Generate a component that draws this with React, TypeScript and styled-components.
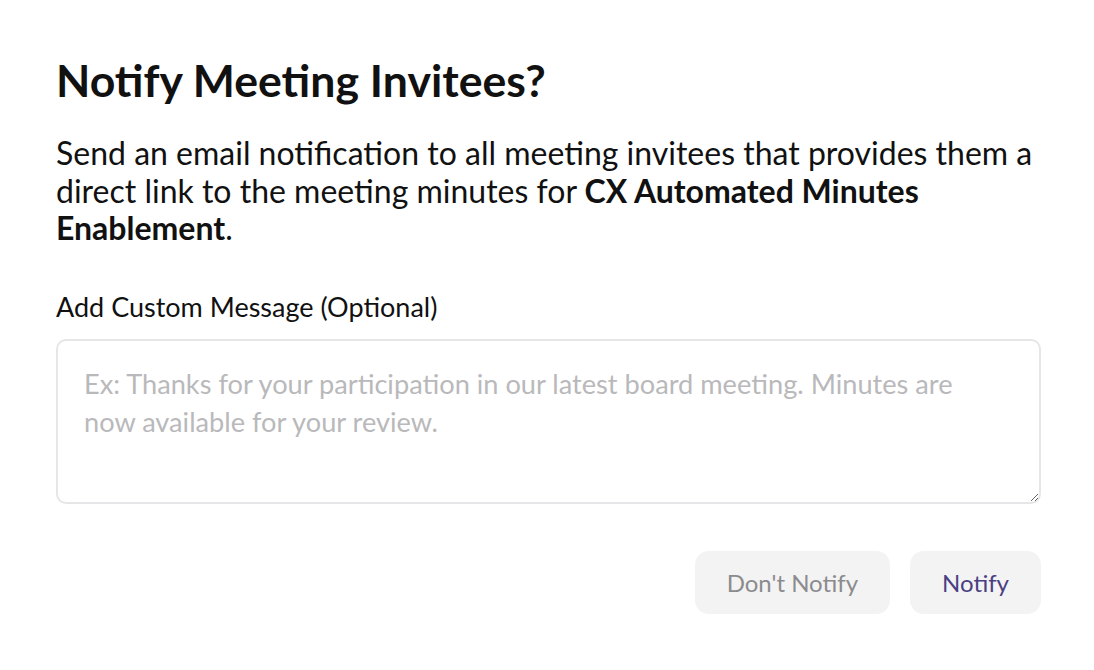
import React from 'react';
import styled, { createGlobalStyle } from 'styled-components';

const GlobalStyle = createGlobalStyle`
  body {
    margin: 0;
    background: #ffffff;
    font-family: Lato, "Open Sans", sans-serif;
  }
`;

const DialogStyled = styled.div`
  box-sizing: border-box;
  width: 1094px;
  height: 670px;
  padding: 50px 54px 0 56px;
  display: flex;
  flex-direction: column;
`;

const TitleStyled = styled.h1`
  margin: 0;
  font-size: 44.6px;
  font-weight: 700;
  line-height: 60px;
  color: #111111;
`;

const DescriptionStyled = styled.p`
  margin: 24px 0 0;
  font-size: 32px;
  line-height: 37.5px;
  color: #111111;

  strong {
    font-weight: 700;
  }
`;

const LabelStyled = styled.label`
  margin-top: 44px;
  font-size: 27px;
  line-height: 32px;
  color: #111111;
`;

const TextAreaStyled = styled.textarea`
  box-sizing: border-box;
  margin-top: 16px;
  width: 985px;
  height: 165px;
  padding: 24px 36px 24px 26px;
  border: 2px solid #e6e6e8;
  border-radius: 10px;
  font-family: Lato, "Open Sans", sans-serif;
  font-size: 27.2px;
  line-height: 38px;
  color: #111111;
  outline: none;

  &::placeholder {
    color: #b9b9bb;
  }
`;

const ActionsStyled = styled.div`
  display: flex;
  justify-content: flex-end;
  gap: 20px;
  width: 985px;
  margin-top: 47px;
`;

const ButtonStyled = styled.button<{ $primary?: boolean }>`
  height: 63px;
  padding: 0 32px;
  border: none;
  border-radius: 14px;
  background: #f3f3f4;
  font-family: Lato, "Open Sans", sans-serif;
  font-size: 24px;
  color: ${(p) => (p.$primary ? '#4b3f83' : '#8b8b8e')};
  cursor: pointer;
`;

const App = () => {
  return (
    <>
      <GlobalStyle />
      <DialogStyled>
        <TitleStyled>Notify Meeting Invitees?</TitleStyled>
        <DescriptionStyled>
          Send an email notification to all meeting invitees that provides them a direct link to the meeting minutes for{' '}
          <strong>CX Automated Minutes Enablement</strong>.
        </DescriptionStyled>
        <LabelStyled htmlFor="custom-message">Add Custom Message (Optional)</LabelStyled>
        <TextAreaStyled
          id="custom-message"
          placeholder="Ex: Thanks for your participation in our latest board meeting. Minutes are now available for your review."
        />
        <ActionsStyled>
          <ButtonStyled>Don't Notify</ButtonStyled>
          <ButtonStyled $primary>Notify</ButtonStyled>
        </ActionsStyled>
      </DialogStyled>
    </>
  );
};

export default App;
